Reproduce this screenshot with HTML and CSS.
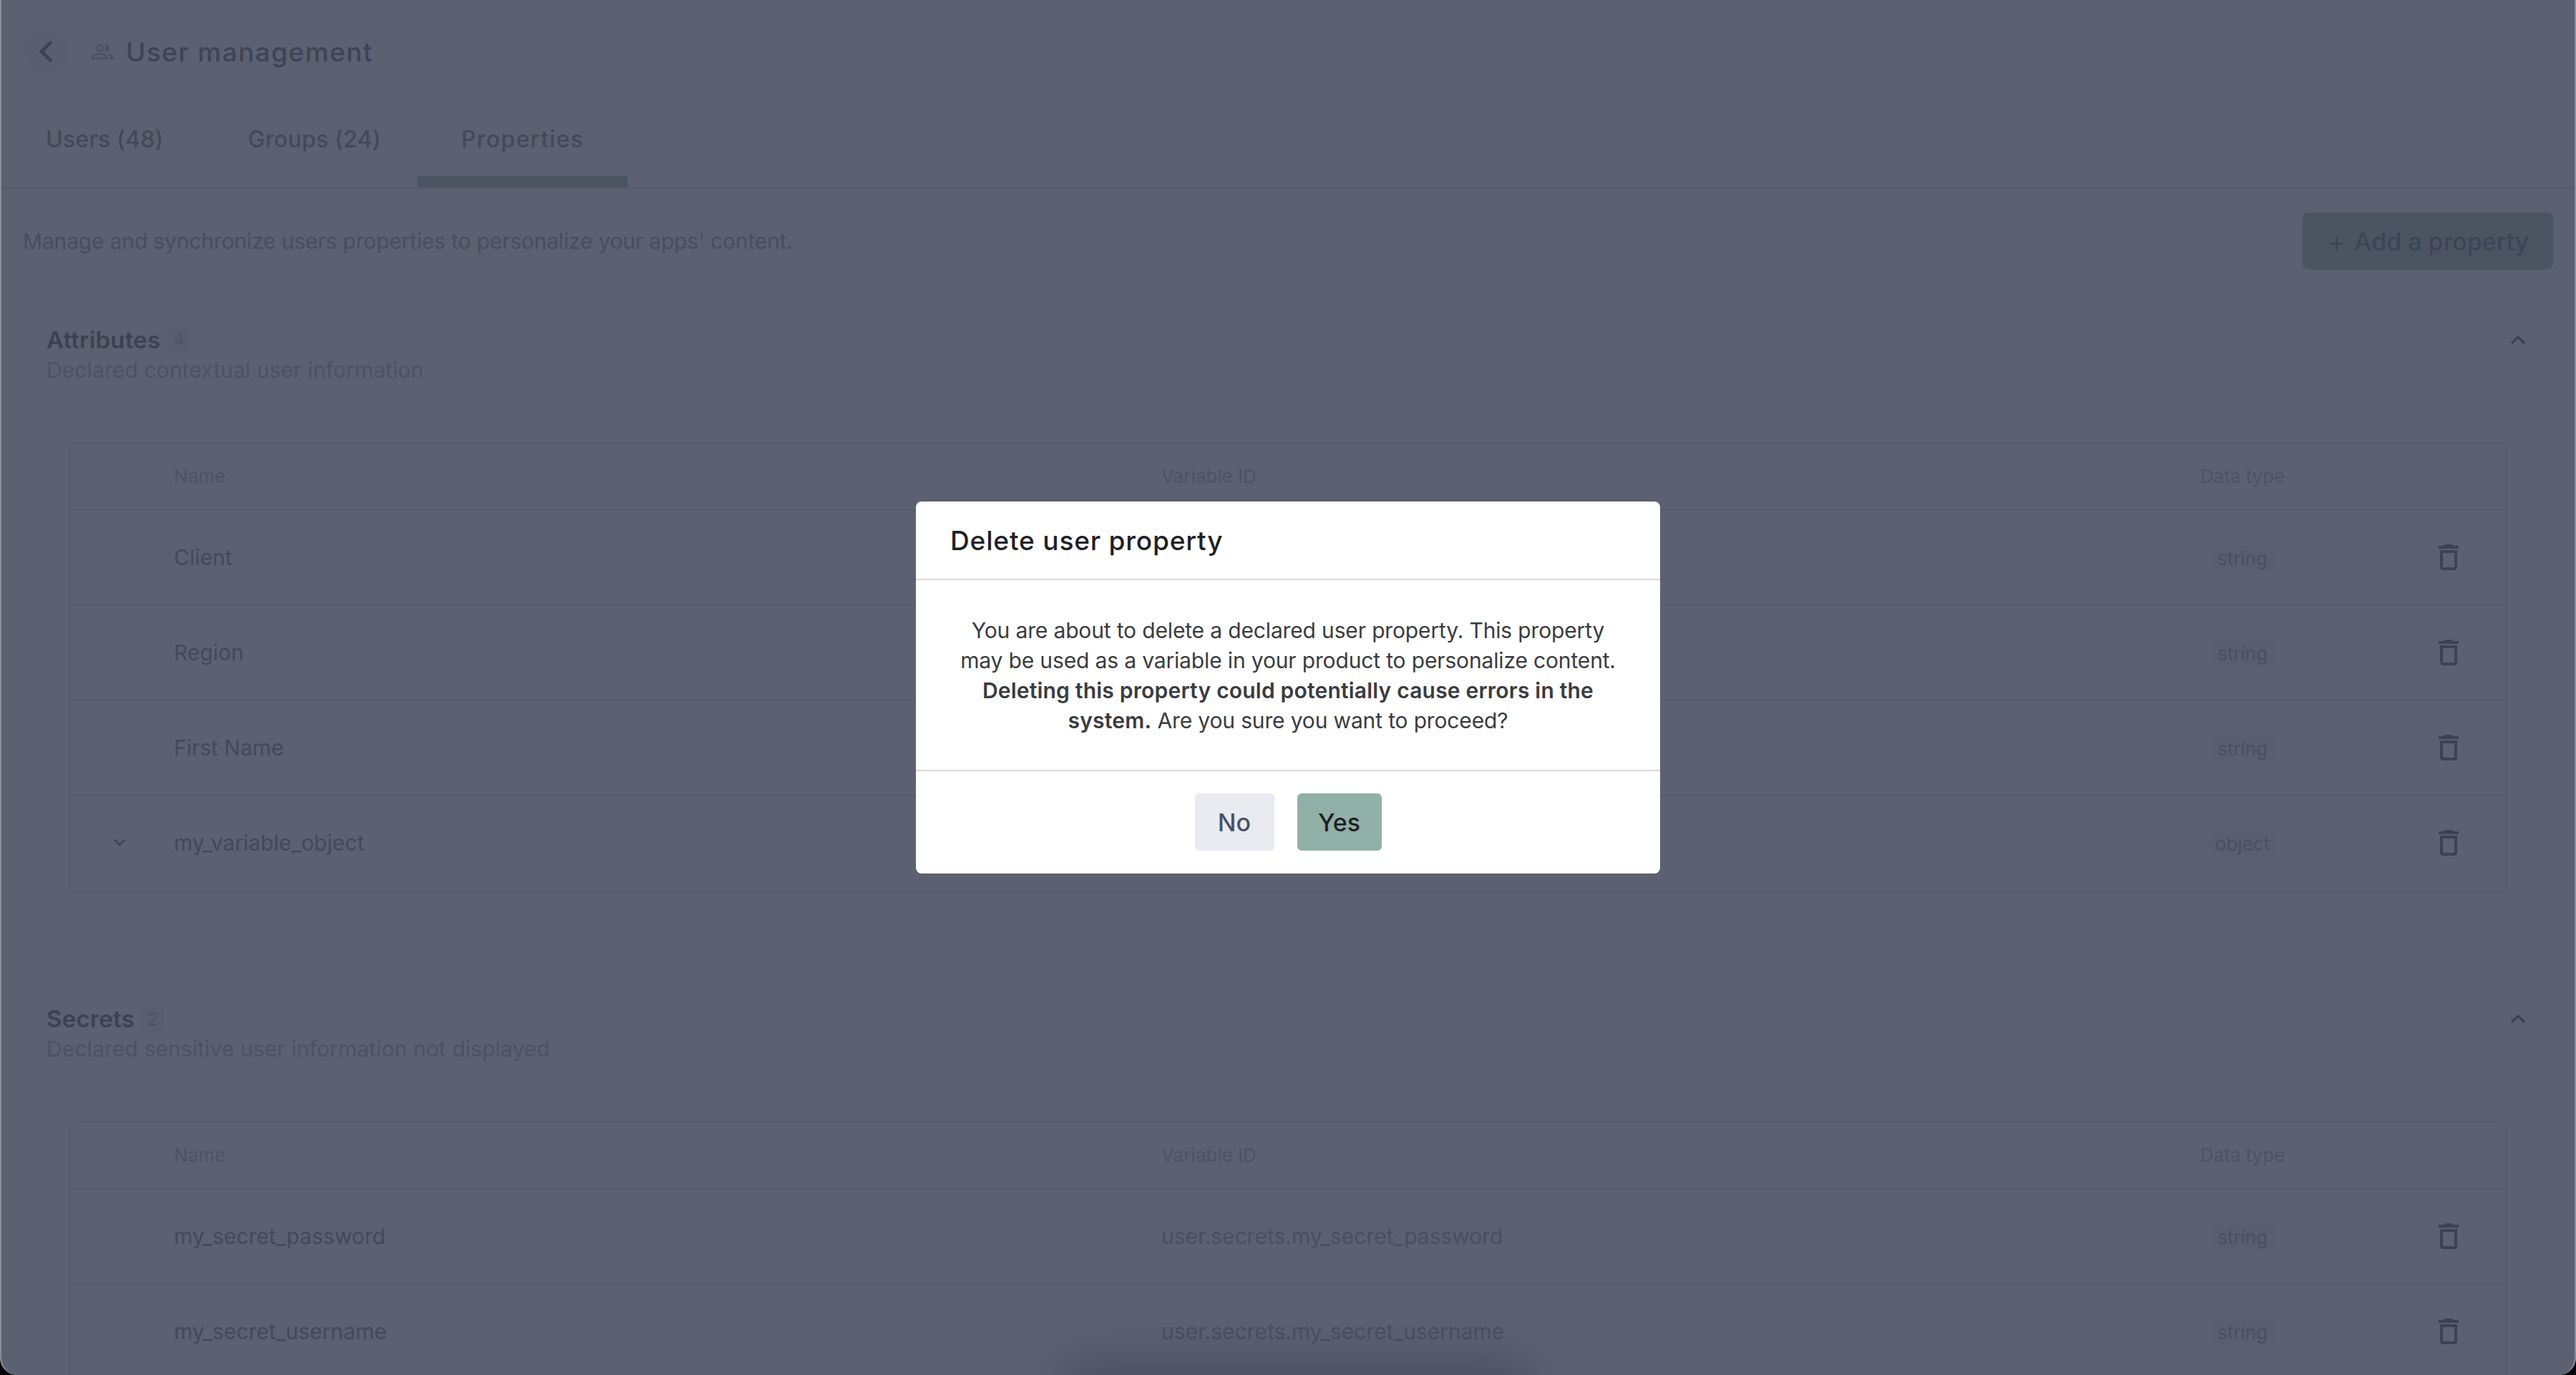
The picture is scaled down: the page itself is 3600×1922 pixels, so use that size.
FILE: index.html
```html
<!DOCTYPE html>
<html lang="en">
<head>
    <meta charset="UTF-8">
    <title>User management</title>
    <link rel="stylesheet" href="styles.css">
</head>
<body>
    <div class="window">

        <!-- PAGE HEADER -->
        <header class="page-header">
            <button class="back-btn">
                <svg width="24" height="36" viewBox="0 0 24 36"><polyline points="20,4 6,18 20,32" fill="none" stroke="#8c8c94" stroke-width="5"/></svg>
            </button>
            <svg class="users-icon" width="33" height="33" viewBox="0 0 24 24" fill="#c4c4d0"><path d="M16.67 13.13C18.04 14.06 19 15.32 19 17v3h4v-3c0-2.18-3.57-3.47-6.33-3.87z"/><path d="M15 12c2.21 0 4-1.79 4-4s-1.79-4-4-4c-.47 0-.91.1-1.33.24C14.5 5.27 15 6.58 15 8s-.5 2.73-1.33 3.76c.42.14.86.24 1.33.24z"/><path d="M9 12c2.21 0 4-1.79 4-4s-1.79-4-4-4-4 1.79-4 4 1.79 4 4 4zm0-6c1.1 0 2 .9 2 2s-.9 2-2 2-2-.9-2-2 .9-2 2-2zM9 13c-2.67 0-8 1.34-8 4v3h16v-3c0-2.66-5.33-4-8-4zm6 5H3v-.99C3.2 16.29 6.3 15 9 15s5.8 1.29 6 2v1z"/></svg>
            <h1 class="page-title">User management</h1>
        </header>

        <!-- TABS -->
        <nav class="tabs">
            <a class="tab">Users (48)</a>
            <a class="tab">Groups (24)</a>
            <a class="tab tab-active">Properties</a>
        </nav>

        <div class="toolbar">
            <p class="toolbar-text">Manage and synchronize users properties to personalize your apps' content.</p>
            <button class="add-btn"><span class="add-plus">+</span> Add a property</button>
        </div>

        <!-- ATTRIBUTES -->
        <section class="section">
            <div class="section-head">
                <div>
                    <h2 class="section-title">Attributes <span class="count">4</span></h2>
                    <p class="section-sub">Declared contextual user information</p>
                </div>
                <svg class="collapse" width="24" height="16" viewBox="0 0 24 16"><polyline points="3,13 12,4 21,13" fill="none" stroke="#848488" stroke-width="3.2"/></svg>
            </div>
            <div class="table">
                <div class="row row-head">
                    <span></span><span>Name</span><span>Variable ID</span><span class="cell-type">Data type</span><span></span>
                </div>
                <div class="row">
                    <span></span><span class="cell-name">Client</span><span class="cell-var"></span><span class="cell-type"><i class="tag">string</i></span>
                    <span class="cell-del"><svg class="trash" width="48" height="48" viewBox="0 0 24 24"><path d="M6 19c0 1.1.9 2 2 2h8c1.1 0 2-.9 2-2V7H6v12zM8 9h8v10H8V9zm7.5-5l-1-1h-5l-1 1H5v2h14V4z"/></svg></span>
                </div>
                <div class="row">
                    <span></span><span class="cell-name">Region</span><span class="cell-var"></span><span class="cell-type"><i class="tag">string</i></span>
                    <span class="cell-del"><svg class="trash" width="48" height="48" viewBox="0 0 24 24"><path d="M6 19c0 1.1.9 2 2 2h8c1.1 0 2-.9 2-2V7H6v12zM8 9h8v10H8V9zm7.5-5l-1-1h-5l-1 1H5v2h14V4z"/></svg></span>
                </div>
                <div class="row">
                    <span></span><span class="cell-name">First Name</span><span class="cell-var"></span><span class="cell-type"><i class="tag">string</i></span>
                    <span class="cell-del"><svg class="trash" width="48" height="48" viewBox="0 0 24 24"><path d="M6 19c0 1.1.9 2 2 2h8c1.1 0 2-.9 2-2V7H6v12zM8 9h8v10H8V9zm7.5-5l-1-1h-5l-1 1H5v2h14V4z"/></svg></span>
                </div>
                <div class="row">
                    <span class="cell-expand"><svg width="20" height="14" viewBox="0 0 20 14"><polyline points="3,3 10,10 17,3" fill="none" stroke="#8c8c94" stroke-width="2.6"/></svg></span>
                    <span class="cell-name">my_variable_object</span><span class="cell-var"></span><span class="cell-type"><i class="tag">object</i></span>
                    <span class="cell-del"><svg class="trash" width="48" height="48" viewBox="0 0 24 24"><path d="M6 19c0 1.1.9 2 2 2h8c1.1 0 2-.9 2-2V7H6v12zM8 9h8v10H8V9zm7.5-5l-1-1h-5l-1 1H5v2h14V4z"/></svg></span>
                </div>
            </div>
        </section>

        <!-- SECRETS -->
        <section class="section section-next">
            <div class="section-head">
                <div>
                    <h2 class="section-title">Secrets <span class="count">2</span></h2>
                    <p class="section-sub">Declared sensitive user information not displayed</p>
                </div>
                <svg class="collapse" width="24" height="16" viewBox="0 0 24 16"><polyline points="3,13 12,4 21,13" fill="none" stroke="#848488" stroke-width="3.2"/></svg>
            </div>
            <div class="table">
                <div class="row row-head">
                    <span></span><span>Name</span><span>Variable ID</span><span class="cell-type">Data type</span><span></span>
                </div>
                <div class="row">
                    <span></span><span class="cell-name">my_secret_password</span><span class="cell-var">user.secrets.my_secret_password</span><span class="cell-type"><i class="tag">string</i></span>
                    <span class="cell-del"><svg class="trash" width="48" height="48" viewBox="0 0 24 24"><path d="M6 19c0 1.1.9 2 2 2h8c1.1 0 2-.9 2-2V7H6v12zM8 9h8v10H8V9zm7.5-5l-1-1h-5l-1 1H5v2h14V4z"/></svg></span>
                </div>
                <div class="row">
                    <span></span><span class="cell-name">my_secret_username</span><span class="cell-var">user.secrets.my_secret_username</span><span class="cell-type"><i class="tag">string</i></span>
                    <span class="cell-del"><svg class="trash" width="48" height="48" viewBox="0 0 24 24"><path d="M6 19c0 1.1.9 2 2 2h8c1.1 0 2-.9 2-2V7H6v12zM8 9h8v10H8V9zm7.5-5l-1-1h-5l-1 1H5v2h14V4z"/></svg></span>
                </div>
            </div>
        </section>

        <div class="bottom-glow"></div>

        <!-- DELETE DIALOG -->
        <div class="overlay">
            <div class="modal">
                <div class="modal-head">Delete user property</div>
                <div class="modal-body">
                    <p>You are about to delete a declared user property. This property<br>
                    may be used as a variable in your product to personalize content.<br>
                    <b>Deleting this property could potentially cause errors in the<br>
                    system.</b> Are you sure you want to proceed?</p>
                </div>
                <div class="modal-foot">
                    <button class="btn btn-no">No</button>
                    <button class="btn btn-yes">Yes</button>
                </div>
            </div>
        </div>
    </div>
</body>
</html>
```

FILE: styles.css
```css
* { margin: 0; padding: 0; box-sizing: border-box; }

body {
    background: #000;
    font-family: "Inter", "Open Sans", sans-serif;
    height: 100vh;
    overflow: hidden;
}

button {
    font-family: inherit;
    border: none;
}

.window {
    position: relative;
    height: 1922px;
    overflow: hidden;
    background: #fff;
    border-left: 2px solid #8b8e9a;
    border-right: 2px solid #8b8e9a;
    border-radius: 0 0 24px 24px;
}

/* Header */
.page-header {
    display: flex;
    align-items: center;
    height: 144px;
    padding-left: 31px;
}

.back-btn {
    display: flex;
    align-items: center;
    justify-content: center;
    width: 62px;
    height: 62px;
    border-radius: 50%;
    background: #f7f7fa;
}

.users-icon {
    margin-left: 32px;
}

.page-title {
    margin-left: 16px;
    font-size: 37px;
    font-weight: 500;
    color: #8c8c94;
    letter-spacing: 1.4px;
}

/* Tabs */
.tabs {
    display: flex;
    height: 120px;
    padding-left: 3px;
    border-bottom: 2px solid #e4e4e4;
}

.tab {
    position: relative;
    display: block;
    padding: 33px 59px 0;
    font-size: 32px;
    font-weight: 500;
    line-height: 36px;
    letter-spacing: 0.2px;
    color: #a0a0a8;
}

.tab-active {
    margin-left: -8px;
    padding: 33px 61px 0;
    letter-spacing: 1.35px;
}

.tab-active::after {
    content: "";
    position: absolute;
    left: 0;
    right: 0;
    bottom: 0;
    height: 16px;
    background: #bcd0c4;
}

/* Toolbar */
.toolbar {
    display: flex;
    align-items: center;
    justify-content: space-between;
    padding: 33px 30px 33px 30px;
}

.toolbar-text {
    font-size: 30px;
    letter-spacing: -0.17px;
    color: #b4b4b0;
}

.add-btn {
    width: 350px;
    height: 80px;
    border-radius: 8px;
    background: #bcd0c4;
    font-size: 34px;
    font-weight: 500;
    color: #8c8c94;
}

.add-plus {
    font-size: 42px;
    font-weight: 300;
    line-height: 1;
    vertical-align: -2px;
    margin-right: 2px;
}

/* Sections */
.section {
    padding: 45px 0 0;
}

.section-next {
    padding-top: 158px;
}

.section-head {
    display: flex;
    justify-content: space-between;
    align-items: flex-start;
    padding: 0 67px 0 63px;
}

.section-title {
    display: flex;
    align-items: center;
    gap: 11px;
    height: 40px;
    font-size: 33px;
    font-weight: 600;
    letter-spacing: 0.2px;
    color: #848488;
}

.count {
    display: inline-flex;
    align-items: center;
    justify-content: center;
    width: 30px;
    height: 35px;
    border-radius: 6px;
    background: #f3f3f7;
    font-size: 24px;
    font-weight: 400;
    color: #c4c4d0;
}

.section-sub {
    margin-top: 2px;
    font-size: 30px;
    line-height: 40px;
    letter-spacing: 0.1px;
    color: #c4c4d0;
}

.collapse {
    margin-top: 12px;
}

/* Table */
.table {
    margin: 81px 95px 0;
    border: 2px solid #ececec;
    border-radius: 8px;
}

.row {
    display: grid;
    grid-template-columns: 144px 1380px 1411px 200px 1fr;
    align-items: center;
    height: 133px;
    padding-bottom: 2px;
    border-bottom: 2px solid #ececec;
    font-size: 30px;
}

.row:last-child {
    height: 131px;
    border-bottom: none;
}

.row-head {
    height: 94px;
    font-size: 26px;
    color: #c8c8cc;
}

.cell-name {
    color: #a0a0a4;
}

.cell-var {
    color: #b8b8bc;
}

.cell-type {
    text-align: center;
}

.cell-expand {
    display: flex;
    justify-content: center;
    padding-right: 8px;
}

.cell-del {
    display: flex;
    padding-left: 164px;
}

.tag {
    display: inline-block;
    margin-top: 4px;
    padding: 0 8px;
    height: 36px;
    line-height: 36px;
    border-radius: 6px;
    background: #f6f6f9;
    font-size: 26px;
    font-style: normal;
    color: #b8b8c0;
}

.trash {
    fill: #848490;
}

.bottom-glow {
    position: absolute;
    left: 1500px;
    bottom: -60px;
    width: 620px;
    height: 60px;
    box-shadow: 0 0 70px 10px rgba(20, 10, 20, 0.4);
}

/* Dialog */
.overlay {
    position: absolute;
    top: 0;
    left: 0;
    right: 0;
    bottom: 0;
    display: flex;
    align-items: center;
    justify-content: center;
    background: rgba(36, 44, 64, 0.75);
}

.modal {
    width: 1040px;
    height: 520px;
    border-radius: 8px;
    background: #fff;
    display: flex;
    flex-direction: column;
}

.modal-head {
    height: 110px;
    padding: 33px 48px 0;
    border-bottom: 2px solid #d6d9df;
    font-size: 37px;
    line-height: 44px;
    font-weight: 500;
    letter-spacing: 0.85px;
    color: #1f2126;
}

.modal-body {
    flex: 1;
    display: flex;
    align-items: center;
    justify-content: center;
    text-align: center;
    border-bottom: 2px solid #d6d9df;
    font-size: 30px;
    line-height: 42px;
    letter-spacing: -0.15px;
    color: #3a3c40;
}

.modal-body b {
    font-weight: 600;
    letter-spacing: 0.2px;
}

.modal-foot {
    display: flex;
    justify-content: center;
    gap: 32px;
    height: 143px;
    padding-top: 31px;
}

.btn {
    height: 80px;
    border-radius: 6px;
    font-size: 34px;
    font-weight: 500;
}

.btn-no {
    width: 111px;
    background: #e9ebf0;
    color: #4a5268;
}

.btn-yes {
    width: 118px;
    background: #91b0a7;
    color: #1f2126;
}
```
